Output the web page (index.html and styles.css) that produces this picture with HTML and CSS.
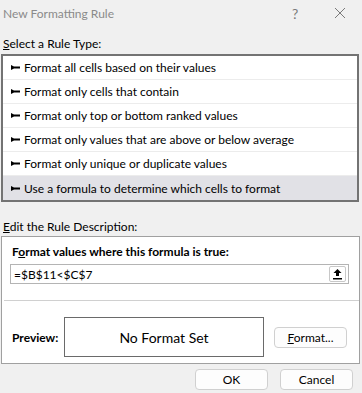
FILE: index.html
```html
<!DOCTYPE html>
<html lang="en">
<head>
    <meta charset="UTF-8">
    <title>New Formatting Rule</title>
    <link rel="stylesheet" href="styles.css">
</head>
<body>

<div class="dialog">
    <div class="titlebar">
        <div class="title">New Formatting Rule</div>
        <div class="title-help">?</div>
        <div class="title-close">
            <svg width="12" height="12" viewBox="0 0 12 12"><path d="M1 1 L11 11 M11 1 L1 11" stroke="#7a7a7a" stroke-width="1" fill="none"/></svg>
        </div>
    </div>

    <div class="label label-first"><u>S</u>elect a Rule Type:</div>
    <div class="listbox">
        <div class="rule"><svg class="bullet" width="9" height="5" viewBox="0 0 9 5"><path d="M0 0 L3 1.5 L9 1.5 L9 3.5 L3 3.5 L0 5 Z" fill="#000"/></svg>Format all cells based on their values</div>
        <div class="rule"><svg class="bullet" width="9" height="5" viewBox="0 0 9 5"><path d="M0 0 L3 1.5 L9 1.5 L9 3.5 L3 3.5 L0 5 Z" fill="#000"/></svg>Format only cells that contain</div>
        <div class="rule"><svg class="bullet" width="9" height="5" viewBox="0 0 9 5"><path d="M0 0 L3 1.5 L9 1.5 L9 3.5 L3 3.5 L0 5 Z" fill="#000"/></svg>Format only top or bottom ranked values</div>
        <div class="rule"><svg class="bullet" width="9" height="5" viewBox="0 0 9 5"><path d="M0 0 L3 1.5 L9 1.5 L9 3.5 L3 3.5 L0 5 Z" fill="#000"/></svg>Format only values that are above or below average</div>
        <div class="rule"><svg class="bullet" width="9" height="5" viewBox="0 0 9 5"><path d="M0 0 L3 1.5 L9 1.5 L9 3.5 L3 3.5 L0 5 Z" fill="#000"/></svg>Format only unique or duplicate values</div>
        <div class="rule selected"><svg class="bullet" width="9" height="5" viewBox="0 0 9 5"><path d="M0 0 L3 1.5 L9 1.5 L9 3.5 L3 3.5 L0 5 Z" fill="#000"/></svg>Use a formula to determine which cells to format</div>
    </div>

    <div class="label label-second"><u>E</u>dit the Rule Description:</div>
    <div class="panel">
        <div class="panel-heading">F<u>o</u>rmat values where this formula is true:</div>
        <div class="formula">
            <span class="formula-text">=$B$11&lt;$C$7</span>
            <span class="collapse">
                <svg width="11" height="12" viewBox="0 0 11 12"><path d="M5.5 1 L1.5 5 L4 5 L4 8 L7 8 L7 5 L9.5 5 Z" fill="#000"/><rect x="1" y="10" width="9" height="1.5" fill="#000"/></svg>
            </span>
        </div>
        <div class="divider"></div>
        <div class="preview-row">
            <div class="preview-label">Preview:</div>
            <div class="preview-box">No Format Set</div>
            <button class="button format-button"><u>F</u>ormat...</button>
        </div>
    </div>

    <div class="footer">
        <button class="button">OK</button>
        <button class="button">Cancel</button>
    </div>
</div>

</body>
</html>
```

FILE: styles.css
```css
html {
    background-color: #f0f0f0;
}

body {
    margin: 0;
    font-family: Lato, "Liberation Sans", sans-serif;
    font-size: 12px;
    color: #000;
}

.dialog {
    width: 362px;
    height: 393px;
    display: flex;
    flex-direction: column;
}

.titlebar {
    height: 26px;
    display: flex;
    align-items: center;
}

.title {
    flex: 1;
    padding-left: 3px;
    font-size: 12px;
    color: #8a8a8a;
}

.title-help {
    width: 14px;
    font-size: 14px;
    color: #7a7a7a;
    margin-right: 28px;
}

.title-close {
    width: 12px;
    height: 12px;
    margin-right: 16px;
}

.label {
    height: 16px;
    line-height: 16px;
    padding-left: 3px;
}

.label-first {
    margin-top: 10px;
    margin-bottom: 2px;
}

.label-second {
    margin-top: 17px;
    margin-bottom: 1px;
}

.listbox {
    margin: 0 3px 0 1px;
    border: 2px solid #737373;
    background: #fff;
}

.rule {
    height: 24px;
    box-sizing: border-box;
    border-bottom: 1px solid #ececec;
    display: flex;
    align-items: center;
    padding-left: 8px;
}

.rule:last-child {
    border-bottom: none;
}

.rule.selected {
    background: #e1e1e6;
}

.bullet {
    margin-right: 4px;
}

.panel {
    margin: 0 2px 0 1px;
    height: 128px;
    box-sizing: border-box;
    border: 1px solid #a0a0a0;
    background: #fff;
    display: flex;
    flex-direction: column;
}

.panel-heading {
    font-weight: bold;
    line-height: 16px;
    padding: 7px 0 0 10px;
}

.formula {
    margin: 4px 10px 0 8px;
    height: 20px;
    box-sizing: border-box;
    border: 1px solid #b4b4b4;
    display: flex;
    align-items: center;
    padding-left: 3px;
}

.formula-text {
    flex: 1;
}

.collapse {
    width: 17px;
    height: 16px;
    box-sizing: border-box;
    border: 1px solid #c8c8c8;
    border-radius: 2px;
    margin-right: 2px;
    display: flex;
    align-items: center;
    justify-content: center;
}

.divider {
    margin: 16px 0 0 2px;
    border-top: 1px solid #d0d0d0;
}

.preview-row {
    margin-top: 16px;
    display: flex;
    align-items: center;
}

.preview-label {
    font-weight: bold;
    width: 52px;
    padding-left: 10px;
}

.preview-box {
    width: 200px;
    height: 40px;
    box-sizing: border-box;
    border: 1px solid #6a6a6a;
    display: flex;
    align-items: center;
    justify-content: center;
    font-size: 14px;
}

.button {
    width: 73px;
    height: 21px;
    box-sizing: border-box;
    font-family: inherit;
    font-size: 12px;
    color: #000;
    background: #fdfdfd;
    border: 1px solid #d0d0d0;
    border-radius: 4px;
    padding: 0;
}

.format-button {
    margin-left: 10px;
}

.footer {
    display: flex;
    justify-content: flex-end;
    gap: 12px;
    margin-top: 5px;
    padding-right: 9px;
}
```
